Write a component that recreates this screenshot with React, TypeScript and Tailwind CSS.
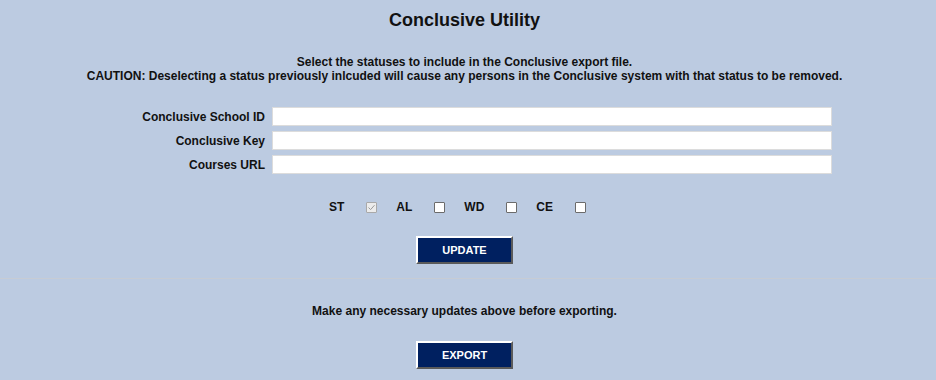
import React, { useState } from "react";

const fields = ["Conclusive School ID", "Conclusive Key", "Courses URL"];

const statuses = [
  { code: "ST", checked: true, disabled: true },
  { code: "AL", checked: false, disabled: false },
  { code: "WD", checked: false, disabled: false },
  { code: "CE", checked: false, disabled: false },
];

function Box({ checked, disabled }: { checked: boolean; disabled: boolean }) {
  return (
    <span
      className={`flex h-[11px] w-[11px] items-center justify-center rounded-[1px] border ${
        disabled ? "border-[#a9a9a9] bg-[#ececec]" : "border-[#6b6b6b] bg-white"
      }`}
    >
      {checked && (
        <svg width="9" height="9" viewBox="0 0 9 9">
          <path d="M1.5 4.5 L3.6 6.6 L7.5 2.2" fill="none" stroke="#9a9a9a" strokeWidth="1" />
        </svg>
      )}
    </span>
  );
}

function NavyButton({ label }: { label: string }) {
  return (
    <button className="h-[28px] w-[97px] border-2 border-t-white border-l-white border-r-[#5a5a5a] border-b-[#5a5a5a] bg-[#002060] text-[11px] font-bold text-white">
      {label}
    </button>
  );
}

export default function App() {
  const [values, setValues] = useState<string[]>(["", "", ""]);

  return (
    <div
      className="h-[380px] w-full bg-[#bccbe1] text-[#111]"
      style={{ fontFamily: '"Liberation Sans", Arial, sans-serif' }}
    >
      <div className="flex w-[929px] flex-col items-center">
        <h1 className="mt-[10px] text-[18px] font-bold leading-[21px]">Conclusive Utility</h1>

        <div className="mt-[24px] text-center text-[12px] font-bold leading-[14px]">
          <p>Select the statuses to include in the Conclusive export file.</p>
          <p>
            CAUTION: Deselecting a status previously inlcuded will cause any persons in the Conclusive system with that
            status to be removed.
          </p>
        </div>

        <div className="mt-[24px] flex w-full flex-col gap-[5px]">
          {fields.map((f, i) => (
            <div key={f} className="flex h-[19px] items-center">
              <label className="w-[265px] text-right text-[12px] font-bold">{f}</label>
              <input
                value={values[i]}
                onChange={(e) => setValues(values.map((v, j) => (j === i ? e.target.value : v)))}
                className="ml-[7px] h-[19px] w-[560px] border border-[#dcdcdc] bg-white px-1 text-[12px] outline-none"
              />
            </div>
          ))}
        </div>

        <div className="mt-[26px] flex h-[14px] items-center pr-[14px] text-[12px] font-bold">
          {statuses.map((s, i) => (
            <div key={s.code} className={`flex items-center ${i > 0 ? "ml-[19px]" : ""}`}>
              <span>{s.code}</span>
              <span className="ml-[22px]">
                <Box checked={s.checked} disabled={s.disabled} />
              </span>
            </div>
          ))}
        </div>

        <div className="mt-[22px]">
          <NavyButton label="UPDATE" />
        </div>
      </div>

      <div className="mt-[14px] w-full border-t border-[#c7ccd4]" />

      <div className="flex w-[929px] flex-col items-center">
        <p className="mt-[25px] text-[12px] font-bold leading-[14px]">
          Make any necessary updates above before exporting.
        </p>

        <div className="mt-[23px]">
          <NavyButton label="EXPORT" />
        </div>
      </div>
    </div>
  );
}
